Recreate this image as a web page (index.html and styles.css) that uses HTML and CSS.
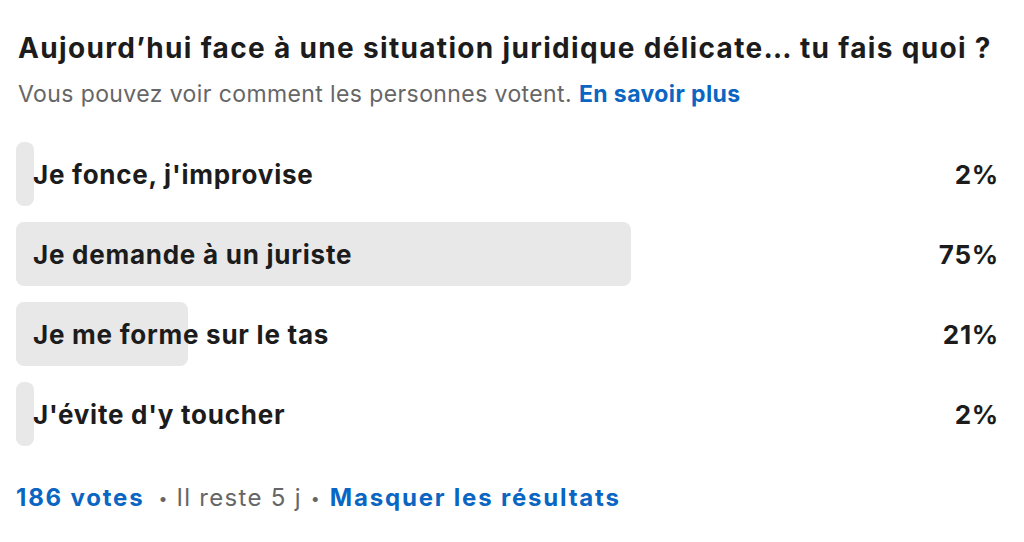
FILE: index.html
```html
<!DOCTYPE html>
<html lang="fr">
<head>
<meta charset="utf-8">
<link rel="stylesheet" href="styles.css">
</head>
<body>
<div class="poll">
  <h1 class="title">Aujourd’hui face à une situation juridique délicate… tu fais quoi ?</h1>
  <p class="sub">Vous pouvez voir comment les personnes votent. <a class="link" href="#">En savoir plus</a></p>
  <ul class="options">
    <li class="opt"><div class="track"><div class="fill" style="width:18px"></div><span class="label">Je fonce, j'improvise</span></div><span class="pct">2%</span></li>
    <li class="opt"><div class="track"><div class="fill" style="width:615px"></div><span class="label">Je demande à un juriste</span></div><span class="pct">75%</span></li>
    <li class="opt"><div class="track"><div class="fill" style="width:172px"></div><span class="label">Je me forme sur le tas</span></div><span class="pct">21%</span></li>
    <li class="opt"><div class="track"><div class="fill" style="width:18px"></div><span class="label">J'évite d'y toucher</span></div><span class="pct">2%</span></li>
  </ul>
  <div class="footer"><a class="link foot-link" href="#">186 votes</a><span class="dot dot-a">•</span><span class="muted">Il reste 5 j</span><span class="dot dot-b">•</span><a class="link foot-link" href="#">Masquer les résultats</a></div>
</div>
</body>
</html>
```
FILE: styles.css
```css
* { box-sizing: border-box; }
html, body { margin: 0; background: #fff; }
body { font-family: Inter, "Noto Sans", sans-serif; color: rgba(0,0,0,0.9); }
.poll { padding: 24px 26px 0 16px; }
.title { margin: 0 0 0 2px; font-size: 28px; font-weight: 700; line-height: 48px; letter-spacing: 1.33px; color: #1c1c1c; white-space: nowrap; }
.sub { margin: 0 0 0 2px; font-size: 23px; line-height: 44px; letter-spacing: 0.4px; color: #666; }
.link { color: #0a66c2; font-weight: 700; text-decoration: none; }
.options { list-style: none; margin: 26px 0 0; padding: 0; display: flex; flex-direction: column; gap: 16px; }
.opt { display: flex; align-items: center; justify-content: space-between; height: 64px; }
.track { position: relative; flex: 1; height: 64px; display: flex; align-items: center; }
.fill { position: absolute; left: 0; top: 0; height: 64px; background: #e8e8e8; border-radius: 8px; }
.label { position: relative; padding-left: 17px; font-size: 26px; font-weight: 700; letter-spacing: 0.75px; color: #1c1c1c; }
.pct { font-size: 26px; font-weight: 700; letter-spacing: 0.75px; margin-right: -1px; color: #1c1c1c; }
.footer { margin-top: 36px; display: flex; align-items: center; font-size: 24px; line-height: 32px; color: #666; }
.foot-link { letter-spacing: 1.8px; }
.muted { letter-spacing: 1.3px; }
.dot { font-size: 16px; letter-spacing: 0; }
.dot-a { margin: 0 9px 0 14px; }
.dot-b { margin: 0 10px 0 9px; }
```
